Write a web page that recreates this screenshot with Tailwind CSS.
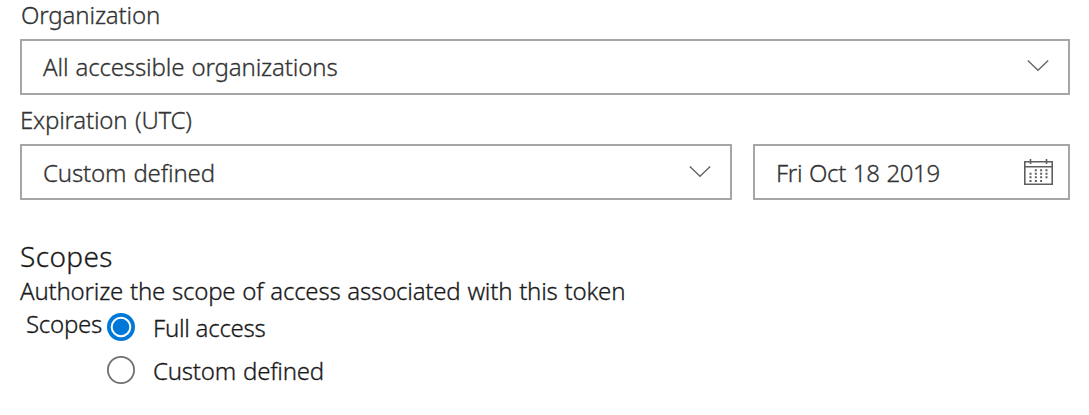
<!DOCTYPE html>
<html lang="en">
<head>
<meta charset="utf-8">
<title>Create token</title>
<script src="https://cdn.jsdelivr.net/npm/@tailwindcss/browser@4"></script>
</head>
<body class="h-[415px] overflow-hidden bg-white pl-5 pr-[19px] font-['Noto_Sans',sans-serif] font-light text-[24px] leading-[30px] text-[#333] whitespace-nowrap [-webkit-text-stroke:0.3px_currentColor]">
  <div class="h-[30px] pl-px tracking-[-0.15px]">Organization</div>
  <div class="mt-[9px] flex h-14 items-center justify-between border-2 border-[#a6a6a6] pr-[19px] pl-[21px]">
    <span class="tracking-[-0.14px] [word-spacing:1px]">All accessible organizations</span>
    <svg class="mb-[2px] h-[13px] w-[22px]" viewBox="0 0 22 13" fill="none" stroke="#666" stroke-width="1.4"><path d="M.8 .5 11 10.3 21.2 .5"/></svg>
  </div>
  <div class="mt-[10px] tracking-[-0.2px] [word-spacing:1.5px]">Expiration (UTC)</div>
  <div class="mt-[9px] flex gap-[21px]">
    <div class="flex h-14 w-[712px] items-center justify-between border-2 border-[#a6a6a6] pr-[19px] pl-[21px]">
      <span class="mt-[2px] tracking-[-0.16px] [word-spacing:1px]">Custom defined</span>
      <svg class="h-[13px] w-[22px]" viewBox="0 0 22 13" fill="none" stroke="#666" stroke-width="1.4"><path d="M.8 .5 11 10.3 21.2 .5"/></svg>
    </div>
    <div class="flex h-14 grow items-center justify-between border-2 border-[#a6a6a6] pr-[15px] pl-[21px]">
      <span class="mt-[2px] tracking-[-0.36px] [word-spacing:1px]">Fri Oct 18 2019</span>
      <svg class="h-[26px] w-[29px]" viewBox="0 0 29 26" fill="none" stroke="#5f5f5f" stroke-width="1.6">
        <path d="M.8 2.7H28.2V25.2H.8ZM.8 7.7H28.2M6.5 0V5M22.5 0V5"/>
        <path stroke-width="2" stroke-dasharray="2 3.33" d="M10.8 11.2H24M5.5 14.8H24M5.5 18.3H24M5.5 22H18"/>
      </svg>
    </div>
  </div>
  <h1 class="mt-[38px] text-[28px] leading-9 tracking-[0.4px] text-[#1a1a1a]">Scopes</h1>
  <p class="mt-[2px] tracking-[-0.2px] text-[#1a1a1a] [word-spacing:0.8px]">Authorize the scope of access associated with this token</p>
  <div class="mt-[3px] flex pl-[6px] text-[#1a1a1a]">
    <div class="w-[81px] tracking-[-0.25px]">Scopes</div>
    <div class="flex flex-col gap-[13px] pt-1">
      <label class="flex h-[30px] items-center gap-[18px]">
        <svg class="mb-[3px] size-7" viewBox="0 0 28 28"><circle cx="14" cy="14" r="14" fill="#0078d7"/><circle cx="14" cy="14" r="9.3" fill="#0078d7" stroke="#fff" stroke-width="2"/></svg>
        <span class="tracking-[-0.25px]">Full access</span>
      </label>
      <label class="flex h-[30px] items-center gap-[18px]">
        <svg class="mb-[3px] size-7" viewBox="0 0 28 28"><circle cx="14" cy="14" r="13.1" fill="#fff" stroke="#707070" stroke-width="1.8"/></svg>
        <span class="tracking-[-0.22px] [word-spacing:1px]">Custom defined</span>
      </label>
    </div>
  </div>
</body>
</html>
